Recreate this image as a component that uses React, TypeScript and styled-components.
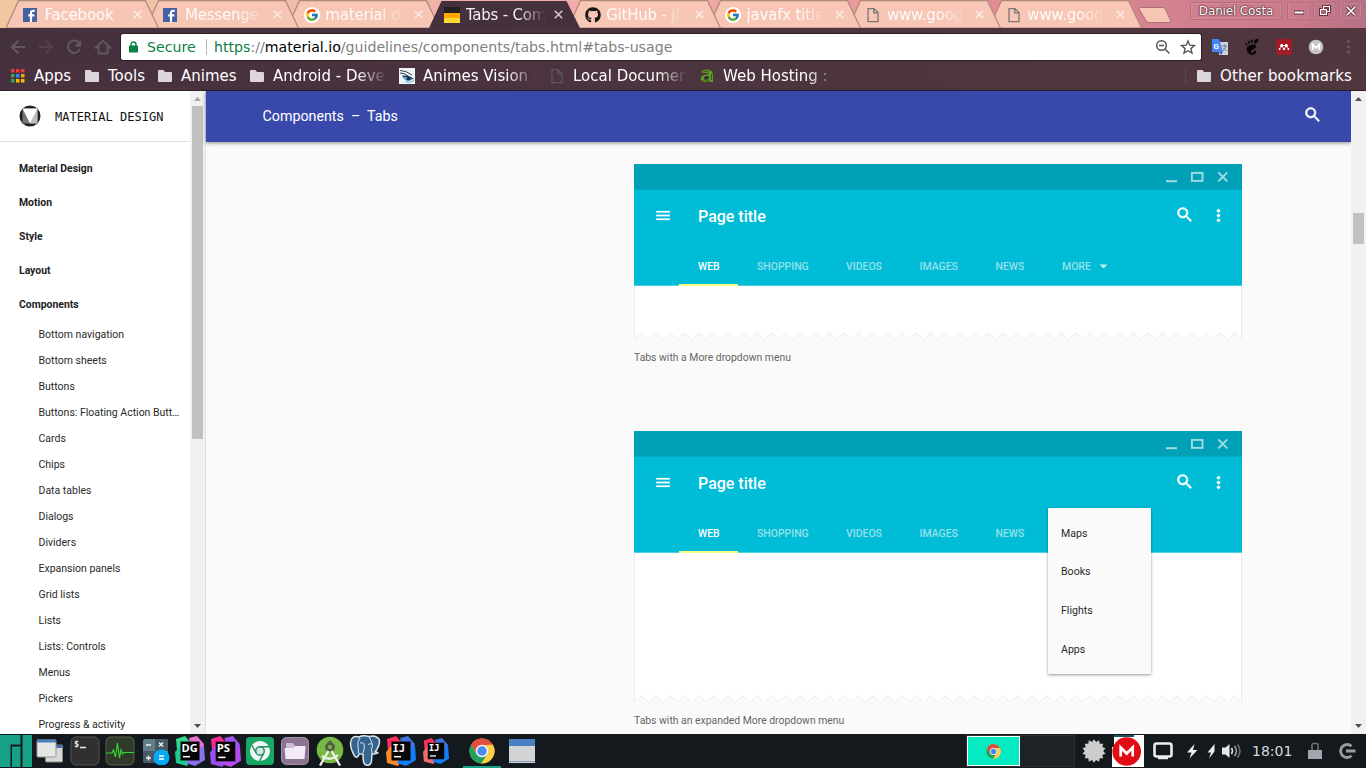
import React from 'react';
import styled, { createGlobalStyle } from 'styled-components';
import { FcGoogle } from 'react-icons/fc';
import { FaGithub, FaMendeley } from 'react-icons/fa';
import { SiGnome } from 'react-icons/si';
import { MdSearch, MdMenu, MdMoreVert } from 'react-icons/md';

const GlobalStyle = createGlobalStyle`
  * { box-sizing: border-box; }
  body { margin: 0; overflow: hidden; }
  svg { display: block; flex: none; }
`;

const uiFont = '"DejaVu Sans", sans-serif';
const pageFont = 'Roboto, sans-serif';

const Screen = styled.div`
  width: 1366px;
  height: 768px;
  display: flex;
  flex-direction: column;
  overflow: hidden;
  font-family: ${uiFont};
`;

/* ---------- browser chrome ---------- */

const TabStrip = styled.div`
  height: 28px;
  display: flex;
  padding-left: 6px;
  background: linear-gradient(90deg, #efc8a0 0, #f2c3a6 170px, #f0b5ac 400px, #efa2a5 800px, #dd8691 1040px, #d68391 1150px, #c9798b 1300px, #b67285 1366px);
`;

const Tab = styled.div<{ $z: number; $active?: boolean }>`
  position: relative;
  z-index: ${(p) => p.$z};
  flex: none;
  width: 153px;
  height: 28px;
  margin-right: -12.6px;
  padding-left: 17px;
  padding-top: 1px;
  display: flex;
  align-items: center;
  color: ${(p) => (p.$active ? '#f4eef0' : '#fffaf8')};
`;

const TabBack = styled.svg`
  position: absolute;
  left: 0;
  top: 0;
`;

const Favicon = styled.div`
  position: relative;
  width: 16px;
  height: 16px;
  display: flex;
  align-items: center;
  color: #181617;
`;

const TabTitle = styled.div<{ $full?: boolean }>`
  position: relative;
  width: 81px;
  margin-left: 5.5px;
  font-size: 15px;
  letter-spacing: -0.2px;
  line-height: 18px;
  white-space: nowrap;
  overflow: hidden;
  mask-image: ${(p) => (p.$full ? 'none' : 'linear-gradient(90deg, #000 52px, transparent 80px)')};
`;

const TabClose = styled.svg`
  position: relative;
  margin-left: 7.5px;
`;

const NewTab = styled.svg`
  margin: 6px 0 0 8px;
`;

const WindowButtons = styled.div`
  display: flex;
  gap: 3px;
  margin: 2px 4px 0 auto;
`;

const WindowButton = styled.div<{ $w: number; $gapBefore?: number }>`
  width: ${(p) => p.$w}px;
  height: 18px;
  margin-left: ${(p) => p.$gapBefore ?? 0}px;
  border: 1px solid #b0707c;
  border-radius: 2px;
  box-shadow: inset 0 0 0 1px #e4a2ac55;
  color: #fff;
  font-size: 12px;
  line-height: 16px;
  letter-spacing: -0.15px;
  text-shadow: 0 0 2px #49202c, 0 0 1px #49202c, 0 0 1px #49202c;
  display: flex;
  align-items: center;
  justify-content: center;
`;

const Toolbar = styled.div`
  height: 34px;
  display: flex;
  align-items: center;
  padding: 3px 0 0 10px;
  background: linear-gradient(90deg, #45303e, #4c343f 60%, #50373f);
`;

const NavIcons = styled.div`
  display: flex;
  gap: 12px;
  width: 111px;
`;

const AddressBar = styled.div`
  width: 1080px;
  height: 26px;
  background: #fff;
  border-radius: 2px;
  box-shadow: 0 0 0 1px #2e1c27;
  display: flex;
  align-items: center;
  padding: 0 5px 0 8px;
  font-size: 14.15px;
  color: #808080;
`;

const Secure = styled.span`
  color: #0b8043;
  margin-left: 9px;
  width: 50px;
`;

const Divider = styled.div`
  width: 1px;
  height: 16px;
  background: #b5b5b5;
  margin: 0 7px 0 9px;
`;

const Url = styled.span`
  flex: 1;
  white-space: nowrap;
  b { font-weight: normal; color: #000; }
  i { font-style: normal; color: #0b8043; }
`;

const AddressIcons = styled.div`
  display: flex;
  gap: 9px;
`;

const Extensions = styled.div`
  display: flex;
  align-items: center;
  gap: 16px;
  padding-left: 11px;
`;

const BookmarksBar = styled.div`
  height: 29px;
  display: flex;
  align-items: center;
  padding: 0 14px 1px 10px;
  background: linear-gradient(90deg, #47313e, #4d3540 60%, #51383f);
  border-bottom: 1px solid #32202c;
  color: #fff;
`;

const Bookmark = styled.div<{ $w: number }>`
  width: ${(p) => p.$w}px;
  display: flex;
  align-items: center;
  gap: 8px;
`;

const BookmarkText = styled.div<{ $fade?: boolean }>`
  width: ${(p) => (p.$fade ? '118px' : 'auto')};
  flex: none;
  white-space: nowrap;
  font-size: 15px;
  line-height: 20px;
  mask-image: ${(p) => (p.$fade ? 'linear-gradient(90deg, #000 84px, transparent 114px)' : 'none')};
`;

const OtherBookmarks = styled.div`
  margin-left: auto;
  width: 167px;
  height: 18px;
  padding-left: 10px;
  border-left: 1px solid #5e464d;
  display: flex;
  align-items: center;
  gap: 8px;
  font-size: 15px;
  letter-spacing: 0.1px;
  white-space: nowrap;
`;

/* ---------- page ---------- */

const Page = styled.div`
  flex: 1;
  min-height: 0;
  display: flex;
  background: #fafafa;
  font-family: ${pageFont};
`;

const Sidebar = styled.div`
  width: 190px;
  background: #fff;
  overflow: hidden;
`;

const Brand = styled.div`
  height: 51px;
  border-bottom: 1px solid #dedede;
  display: flex;
  align-items: center;
  padding-left: 18.5px;
  font-family: "DejaVu Sans Mono", monospace;
  font-size: 12px;
  color: #111;
`;

const BrandName = styled.span`
  margin: 2px 0 0 14.5px;
  white-space: nowrap;
`;

const Sections = styled.div`
  padding: 10px 0 0 19px;
`;

const Section = styled.div`
  height: 34px;
  line-height: 34px;
  font-size: 10.42px;
  font-weight: 700;
  color: #212121;
`;

const Topic = styled.div`
  width: 144px;
  margin-left: 19.5px;
  height: 26px;
  line-height: 26px;
  font-size: 10.5px;
  color: #2a2a2a;
  white-space: nowrap;
`;

const ScrollTrack = styled.div<{ $edge?: boolean }>`
  width: ${(p) => (p.$edge ? 16 : 15)}px;
  background: #f1f1f1;
  border-right: ${(p) => (p.$edge ? '1px solid #e0e0e0' : 'none')};
  display: flex;
  flex-direction: column;
  align-items: center;
`;

const ScrollThumb = styled.div<{ $before: number; $h: number }>`
  width: 11px;
  height: ${(p) => p.$h}px;
  margin-top: ${(p) => p.$before}px;
  margin-bottom: auto;
  background: #c1c1c1;
`;

const Main = styled.div`
  flex: 1;
  min-width: 0;
  display: flex;
  flex-direction: column;
`;

const PageHeader = styled.div`
  height: 51px;
  flex: none;
  background: #3949ab;
  box-shadow: 0 1px 4px rgba(0, 0, 0, 0.45);
  display: flex;
  align-items: center;
  justify-content: space-between;
  padding: 0 29px 3px 56.5px;
  color: #fff;
  font-size: 14.25px;
  white-space: pre;
`;

const HeaderTitle = styled.span`
  padding-top: 2px;
`;

const SearchIcon = styled(MdSearch).attrs({ size: 19.5 })`
  path:last-child {
    stroke: #fff;
    stroke-width: 0.7px;
  }
`;

const Article = styled.div`
  padding: 22px 0 0 428px;
`;

const Figure = styled.div<{ $h: number }>`
  width: 608px;
  height: ${(p) => p.$h}px;
`;

const Mock = styled.div<{ $h: number }>`
  position: relative;
  height: ${(p) => p.$h}px;
`;

const MockTitleBar = styled.div`
  height: 26px;
  background: #00a0b6;
  border-bottom: 1px solid #00a9c1;
  display: flex;
  justify-content: flex-end;
  padding: 7px 13px 0 0;
`;

const MockAppBar = styled.div`
  height: 50px;
  background: #00bcd7;
  display: flex;
  align-items: center;
  padding: 0 14.5px 0 20px;
  color: #fff;
`;

const MockTitle = styled.div`
  flex: 1;
  margin-left: 26px;
  padding-top: 3px;
  font-size: 16px;
  font-weight: 500;
`;

const MockTabs = styled.div`
  height: 46px;
  background: #00bcd7;
  border-bottom: 1px solid #4dd0e1;
  display: flex;
  padding-left: 45px;
`;

const MockTab = styled.div<{ $w: number; $active?: boolean }>`
  width: ${(p) => p.$w}px;
  height: 46px;
  padding: 8px 0 0 19px;
  border-bottom: ${(p) => (p.$active ? '2px solid #f4ff81' : '2px solid transparent')};
  display: flex;
  align-items: center;
  gap: 8px;
  font-size: 10.45px;
  font-weight: 500;
  color: ${(p) => (p.$active ? '#fff' : '#96e1ec')};
`;

const MockMenuIcon = styled(MdMenu).attrs({ size: 19 })`
  width: 18px;
  height: 19px;
  path:last-child {
    stroke: #fff;
    stroke-width: 0.3px;
  }
`;

const MockDots = styled(MdMoreVert).attrs({ size: 19 })`
  margin-left: 14.5px;
  path:last-child {
    stroke: #fff;
    stroke-width: 0.5px;
  }
`;

const Caption = styled.div`
  margin-top: 11px;
  font-size: 10.4px;
  line-height: 14px;
  color: #666;
`;

const Menu = styled.div`
  position: absolute;
  left: 414px;
  top: 77px;
  width: 103px;
  height: 166px;
  padding: 6.5px 13px 4px;
  background: #fafafa;
  border-radius: 1px;
  box-shadow: 0 1px 3px rgba(0, 0, 0, 0.42);
`;

const MenuItem = styled.div`
  height: 38.8px;
  line-height: 38.8px;
  font-size: 10.6px;
  color: #2a2a2a;
`;

/* ---------- task bar ---------- */

const TaskBar = styled.div`
  height: 34px;
  flex: none;
  display: flex;
  align-items: stretch;
  background: #14191d;
`;

const Launcher = styled.div<{ $w: number; $active?: boolean }>`
  width: ${(p) => p.$w}px;
  height: 34px;
  display: flex;
  align-items: center;
  justify-content: center;
  box-shadow: ${(p) => (p.$active ? 'inset 0 -2px 0 #16a085' : 'none')};
`;

const Pager = styled.div`
  margin: 1px 0 1px auto;
  width: 109px;
  height: 32px;
  display: flex;
  background: #1d2226;
  border: 1px solid #2b3236;
`;

const PagerActive = styled.div`
  width: 53px;
  height: 30px;
  border: 1px solid #fff;
  background: #04ebc3;
  display: flex;
  align-items: center;
  justify-content: center;
`;

const Clock = styled.div`
  width: 58px;
  padding-left: 8px;
  line-height: 34px;
  font-size: 14px;
  color: #d8d8d8;
`;

/* ---------- drawings ---------- */

const FacebookIcon = () => (
  <svg width="14" height="14" viewBox="0 0 14 14">
    <rect width="14" height="14" fill="#4661a3" />
    <path d="M8 14V5q0-2.200 2.200-2.200h1.600M5.300 7.400h6" stroke="#fff" strokeWidth="2.100" fill="none" />
  </svg>
);

const GoogleIcon = () => (
  <svg width="16" height="16" viewBox="0 0 16 16">
    <circle cx="8" cy="8" r="8" fill="#fff" />
    <FcGoogle x="1" y="1" width="14" height="14" size={14} />
  </svg>
);

const MaterialTabIcon = () => (
  <svg width="16" height="16">
    <rect width="16" height="6" fill="#212121" />
    <rect y="6" width="16" height="5" fill="#ffa400" />
    <rect y="11" width="16" height="5" fill="#fdd835" />
  </svg>
);

const DocIcon = ({ color }: { color: string }) => (
  <svg width="16" height="16" viewBox="0 0 16 16" fill="none" stroke={color} strokeWidth="1.3">
    <path d="M3 1.600h6l4 4v9H3zM8.800 1.800v4.100h4" />
  </svg>
);

const FolderIcon = () => (
  <svg width="16" height="16" viewBox="0 0 16 16">
    <path d="M1 3q0-1 1-1h4.500l1.500 2h6q1 0 1 1v8q0 1-1 1H2q-1 0-1-1z" fill="#dcd5db" />
  </svg>
);

const AppsIcon = () => {
  const colors = ['#f0392f', '#f0392f', '#f0392f', '#34a853', '#2d8cf0', '#f9a01b', '#34a853', '#fbbc05', '#fbbc05'];
  return (
    <svg width="16" height="16">
      {colors.map((c, i) => (
        <rect key={i} x={1 + (i % 3) * 5} y={1 + Math.floor(i / 3) * 5} width="3.500" height="3.500" fill={c} />
      ))}
    </svg>
  );
};

const EyeIcon = () => (
  <svg width="16" height="16">
    <rect width="16" height="16" fill="#eef5f9" />
    <path d="M1 2.500q6 0 12 4.500M1 5q5 0 8 3" stroke="#33414d" strokeWidth="1" fill="none" />
    <path d="M3 8.500q6-2 11 2.500-5 3-9 0z" fill="#4aa3d4" />
    <path d="M3.500 8q6-1 11 3M9 8.500q3 1 2 3.500H8z" stroke="#123" strokeWidth=".8" fill="#1b3a52" />
    <path d="M6 13.500q5 2 9-1" stroke="#64b2dd" fill="none" />
  </svg>
);

const HostingIcon = () => (
  <svg width="16" height="16" fill="none">
    <path d="M2 4.500Q3 1.500 8 1.500q6 0 6 6V14h-3l-1-1q-2 1.500-5 1-4-1-3-5 2-3 7-2.500L9 5H6z" fill="#5f9a26" />
    <path d="M5 10q0-2 3-2l2 .5q0 3-3 3.500-2 0-2-2z" fill="#3c2d38" />
    <path d="M4 4q3-2 6 0M12.500 6v6M4 13q3 1 6-1" stroke="#355c16" strokeWidth="1" />
  </svg>
);

const ChromeIcon = ({ size }: { size: number }) => (
  <svg width={size} height={size} viewBox="0 0 48 48">
    <circle cx="24" cy="24" r="23" fill="#fbc42f" />
    <path d="M4 12.500A23 23 0 0 1 44 12.500L24 13z" fill="#df4f3f" />
    <path d="M4 12.500A23 23 0 0 1 24 1l20 11.500H24L14.500 30z" fill="#df4f3f" />
    <path d="M4 12.500A23 23 0 0 0 23 47l11-17-10 5-10-5z" fill="#1fa05f" />
    <path d="M44 12.500A23 23 0 0 1 23 47l11-17V12.500z" fill="#fdd04a" />
    <circle cx="24" cy="24" r="11.500" fill="#f4f4f4" />
    <circle cx="24" cy="24" r="8.800" fill="#4a89f3" />
  </svg>
);

const Arrow = ({ up, color }: { up?: boolean; color: string }) => (
  <svg width="15" height="15" viewBox="0 0 15 15">
    <path d={up ? 'M4 10h7L7.500 6z' : 'M4 5h7L7.500 9z'} fill={color} />
  </svg>
);

const BrandLogo = () => (
  <svg width="22" height="22" viewBox="0 0 22 22">
    <circle cx="11" cy="11" r="10.500" fill="#212121" />
    <path d="M3.500 3.500h15v15h-15z" fill="#757575" />
    <path d="M18.500 3.500v15H11z" fill="#bdbdbd" />
    <path d="M3.500 3.500h15L11 18.500z" fill="#fff" />
  </svg>
);

const MockWindowIcons = () => (
  <svg width="64" height="13" viewBox="0 0 64 13" fill="none" stroke="#a3dbe2">
    <path d="M1 10.200h11" strokeWidth="2" />
    <rect x="26.900" y="1.900" width="10.600" height="8" strokeWidth="1.900" />
    <path d="M53.300 1.300l9 9M62.300 1.300l-9 9" strokeWidth="1.900" />
  </svg>
);

/* white paper area whose lower edge is torn in a zigzag */
const TornPaper = ({ height }: { height: number }) => {
  const pts = ['0.5,0', `0.5,${height - 1}`];
  for (let x = 7.2; x < 607; x += 14.48) {
    pts.push(`${x},${height - 7.3}`, `${Math.min(x + 7.24, 607.5)},${height - 0.5}`);
  }
  pts.push('607.5,0');
  return (
    <svg width="608" height={height}>
      <polyline points={pts.join(' ')} fill="#fff" stroke="#ebebeb" />
    </svg>
  );
};

const JetBrainsIcon = ({ label, colors, size }: { label: string; colors: string[]; size: number }) => (
  <svg width={size} height={size} viewBox="0 0 30 30">
    <path d="M1 3L10 0l6 7-9 9-5-2z" fill={colors[0]} />
    <path d="M14 2l8-2 7 8-2 10-9 2z" fill={colors[1]} />
    <path d="M0 16l5-6 13 10-6 10-11-3z" fill={colors[2]} />
    <path d="M19 14l10-4 1 14-10 6-9-3z" fill={colors[3]} />
    <rect x="5.500" y="5.500" width="19" height="19" fill="#050505" />
    <text
      x="6.500"
      y="15.500"
      fontSize={label === 'IJ' ? 10.5 : 11}
      fontWeight="bold"
      fontFamily={label === 'IJ' ? 'DejaVu Sans Mono, monospace' : 'Open Sans, sans-serif'}
      fill="#fff"
    >
      {label}
    </text>
    <path d="M8 20.700h7" stroke="#fff" strokeWidth="1.500" />
  </svg>
);

const PostgresIcon = () => (
  <svg width="32" height="32" viewBox="0 0 32 32" strokeLinejoin="round">
    <path
      d="M10 2Q2 0 1.500 8q0 6 4 13 2 2.500 4-.5l1-2q1.500 1 3.500.8 0 3 .5 7 .7 4 4 4t4-4.500l.5-7q4 .7 6-1-1-.8-3-.7 6-8 4-13-3-4.500-10-2.600Q14 0 10 2z"
      fill="#33658f"
      stroke="#dfe6ea"
      strokeWidth="1.500"
    />
    <path d="M11 3q-3 3-2 9 1 3 0 6M20 2q3 4 3.500 9-2 3-.5 7M11 8q3-1 4 1 1 5-1 9M22.500 9q-3-1-3.500 1" fill="none" stroke="#dfe6ea" strokeWidth="1" />
  </svg>
);

const ManjaroIcon = () => (
  <svg width="32" height="32">
    <path d="M0 0h20.500v9.500H10.500V32H0zM12 11.500h8.500V32H12zM22.500 0H32v32h-9.500z" fill="#16a085" />
  </svg>
);

const WindowsIcon = () => (
  <svg width="28" height="26" viewBox="0 0 28 26">
    <rect x="9.500" y="7" width="17" height="17" rx="1" fill="#d8d8d5" stroke="#888" />
    <path d="M10 7h16v3H10z" fill="#3b6fae" />
    <rect x="1" y="2" width="19" height="17" rx="1" fill="#e6e6e4" stroke="#999" />
    <path d="M1 1.500h19v3H1z" fill="#4a7fbf" />
  </svg>
);

const TerminalIcon = () => (
  <svg width="30" height="30">
    <rect x="1" y="1" width="28" height="28" rx="5" fill="#303030" stroke="#555" />
    <text x="4" y="11" fontSize="8.500" fontWeight="bold" fontFamily="DejaVu Sans Mono, monospace" fill="#eee">$</text>
    <path d="M10 11.500h6" stroke="#eee" strokeWidth="1.500" />
  </svg>
);

const MonitorIcon = () => (
  <svg width="30" height="30">
    <rect x="1" y="1" width="28" height="28" rx="5" fill="#303a2a" stroke="#59614f" />
    <path d="M1 17h6l1.500-3 2 7 2-14 2 15 1.500-8 1.500 4 1.500-1.500h10" stroke="#35d435" strokeWidth="1.200" fill="none" />
  </svg>
);

const CalculatorIcon = () => (
  <svg width="28" height="28">
    <rect x="1" y="2" width="25" height="24" rx="2" fill="#607d8b" />
    <path d="M1 14h12v12H3q-2 0-2-2zM13 2h11q2 0 2 2v10H13z" fill="#455a64" />
    <path d="M4 8h5M4 21h5M6.500 18.500v5M17 5.500l4 4m0-4l-4 4" stroke="#eee" strokeWidth="1.500" />
    <circle cx="19.500" cy="20.500" r="8" fill="#03a9f4" />
    <path d="M17 19h5M17 22h5" stroke="#fff" strokeWidth="1.400" />
  </svg>
);

const ChromiumAppIcon = () => (
  <svg width="28" height="28">
    <rect width="28" height="28" rx="4" fill="#18a765" />
    <circle cx="14" cy="14" r="10" fill="#f1f7f4" />
    <circle cx="14" cy="14" r="4.300" fill="#cfe9dc" stroke="#238a5c" strokeWidth="1.400" />
    <path d="M14 9.700h9M10.200 16L6 8.500M17.700 16.300L13.500 24" stroke="#238a5c" strokeWidth="1.400" />
  </svg>
);

const FilesIcon = () => (
  <svg width="28" height="28">
    <rect x=".5" y=".5" width="27" height="27" rx="5" fill="#8c7491" stroke="#a791ab" />
    <path d="M5 6h7l2 3h8v4H5z" fill="#cfbcd4" />
    <path d="M3.500 11h9l2-2h10l-1 13h-19z" fill="#f4e9f7" />
  </svg>
);

const AndroidStudioIcon = () => (
  <svg width="28" height="30" fill="none">
    <circle cx="14" cy="14" r="13.300" fill="#78b943" />
    <circle cx="14" cy="11" r="3.500" stroke="#555e4b" strokeWidth="3" />
    <path d="M14 7V4.500" stroke="#555e4b" strokeWidth="2.500" />
    <path d="M12.500 15L4 29.500M15.500 15L24 29.500M6 20q8 6 16-1" stroke="#eef1ec" strokeWidth="2.300" />
  </svg>
);

const AppWindowIcon = () => (
  <svg width="26" height="24">
    <rect width="26" height="24" fill="#d3d4d5" />
    <rect width="26" height="7" fill="#4a7fc1" />
    <path d="M0 22.500h26" stroke="#8199b4" />
  </svg>
);

const gearPoints = Array.from({ length: 28 }, (_, i) => {
  const r = i % 2 ? 9.2 : 11.8;
  const a = (i * Math.PI) / 14;
  return `${12 + r * Math.sin(a)},${12 - r * Math.cos(a)}`;
}).join(' ');

const GearIcon = () => (
  <svg width="24" height="24">
    <polygon points={gearPoints} fill="#cdcdcb" />
  </svg>
);

const MegaIcon = () => (
  <svg width="32" height="32" viewBox="0 0 32 32">
    <rect width="32" height="32" fill="#fff" />
    <path d="M0 0h22v2H0z" fill="#1b5058" />
    <path d="M0 0h2v12H0z" fill="#14191d" />
    <circle cx="14.700" cy="16.500" r="14.300" fill="#e10d14" />
    <path d="M8.700 21.500v-9l6 6 6-6v9" stroke="#fff" strokeWidth="2.700" fill="none" />
  </svg>
);

const ScreenIcon = () => (
  <svg width="20" height="18" fill="none">
    <rect x="1.500" y="1.500" width="17" height="13" rx="2" stroke="#eee" strokeWidth="2.600" />
    <path d="M5 16h10" stroke="#eee" strokeWidth="2.500" />
  </svg>
);

const BoltIcon = ({ half }: { half?: boolean }) => (
  <svg width="12" height="18" viewBox="0 0 12 18">
    <path d={half ? 'M9.500 2L2.500 10.500H6l-2 6 5.500-7z' : 'M8.500 2L1 10.500h4.500l-2 6L11.500 8H7z'} fill="#ececec" />
  </svg>
);

const VolumeIcon = () => (
  <svg width="22" height="16" fill="none" strokeWidth="1.500">
    <path d="M1 4.500h3.500l4-3.500v14l-4-3.500H1z" fill="#e6e6e6" />
    <path d="M10.500 5q2 3 0 6" stroke="#e6e6e6" />
    <path d="M13.500 3q4 5 0 10" stroke="#a5a5a5" />
    <path d="M16.500 1.500q5 6.500 0 13" stroke="#707478" />
  </svg>
);

const LockTrayIcon = () => (
  <svg width="14" height="18" fill="none">
    <path d="M4 9V3q0-1.500 1.500-1.500h3Q10 1.500 10 3v6" stroke="#6c717a" strokeWidth="1.600" />
    <rect y="8" width="14" height="9" fill="#a3a4ae" />
  </svg>
);

const LogoutIcon = () => (
  <svg width="18" height="18" fill="none" stroke="#9a9ba1" strokeWidth="2.800">
    <path d="M13.500 4.200a6.500 6.500 0 1 0 0 9.600M8 9h9.500" />
  </svg>
);

const TranslateIcon = () => (
  <svg width="16" height="16">
    <rect x="7" y="3" width="9" height="13" fill="#cdd3dc" />
    <path d="M0 0h7l4 13H0z" fill="#4285f4" />
    <text x="1.500" y="9.500" fontSize="8" fontWeight="bold" fontFamily="Roboto, sans-serif" fill="#fff">G</text>
    <path d="M10 7h5M12.500 5.500V7M14 7q-1 3-3.500 5M11.500 9l3 3" stroke="#6a7a90" fill="none" />
    <path d="M7 13h4l-2 3z" fill="#3367d6" />
  </svg>
);

/* ---------- composition ---------- */

const tabs = [
  { title: 'Facebook', icon: <FacebookIcon />, full: true },
  { title: 'Messenge', icon: <FacebookIcon /> },
  { title: 'material d', icon: <GoogleIcon /> },
  { title: 'Tabs - Com', icon: <MaterialTabIcon />, active: true },
  { title: 'GitHub - jf', icon: <FaGithub size={16} /> },
  { title: 'javafx title', icon: <GoogleIcon /> },
  { title: 'www.goog', icon: <DocIcon color="#777" /> },
  { title: 'www.goog', icon: <DocIcon color="#777" /> },
];

const bookmarks = [
  { text: 'Apps', icon: <AppsIcon />, w: 74 },
  { text: 'Tools', icon: <FolderIcon />, w: 73 },
  { text: 'Animes', icon: <FolderIcon />, w: 92 },
  { text: 'Android - Deve', icon: <FolderIcon />, w: 150, fade: true },
  { text: 'Animes Vision -', icon: <EyeIcon />, w: 150, fade: true },
  { text: 'Local Documen', icon: <DocIcon color="#5d565a" />, w: 150, fade: true },
  { text: 'Web Hosting :', icon: <HostingIcon />, w: 150, fade: true },
];

const topics = [
  'Bottom navigation', 'Bottom sheets', 'Buttons', 'Buttons: Floating Action Butt…', 'Cards', 'Chips',
  'Data tables', 'Dialogs', 'Dividers', 'Expansion panels', 'Grid lists', 'Lists', 'Lists: Controls',
  'Menus', 'Pickers', 'Progress & activity',
];

const mockTabs = [
  { label: 'WEB', w: 59 },
  { label: 'SHOPPING', w: 89 },
  { label: 'VIDEOS', w: 73.5 },
  { label: 'IMAGES', w: 76 },
  { label: 'NEWS', w: 66.5 },
  { label: 'MORE', w: 66 },
];

const BrowserTab = ({ tab, index }: { tab: (typeof tabs)[number]; index: number }) => (
  <Tab $z={tab.active ? 20 : 10 - index} $active={tab.active}>
    <TabBack width="153" height="28">
      {tab.active ? (
        <path d="M2 28L14.500 1H139.500L153 28z" fill="#45303d" />
      ) : (
        <path d="M0 28L12.500.7H139.500L152.500 28z" fill="#f7c6b5" stroke="#b08a7c" strokeWidth="1.200" />
      )}
    </TabBack>
    <Favicon>{tab.icon}</Favicon>
    <TabTitle $full={tab.full}>{tab.title}</TabTitle>
    <TabClose width="9" height="9" viewBox="0 0 9 9">
      <path d="M.8.800l7.400 7.400M8.200.800L.8 8.200" stroke={tab.active ? '#cfc6ca' : '#fdebe5'} strokeWidth="1.600" />
    </TabClose>
  </Tab>
);

const MockWindow = ({ height, menu }: { height: number; menu?: boolean }) => (
  <Mock $h={height}>
    <MockTitleBar><MockWindowIcons /></MockTitleBar>
    <MockAppBar>
      <MockMenuIcon />
      <MockTitle>Page title</MockTitle>
      <SearchIcon />
      <MockDots />
    </MockAppBar>
    <MockTabs>
      {mockTabs.filter((t) => !menu || t.label !== 'MORE').map((t, i) => (
        <MockTab key={t.label} $w={t.w} $active={i === 0}>
          {t.label}
          {t.label === 'MORE' && <svg width="9" height="5"><path d="M.5.500h8l-4 4z" fill="#c5f0f5" /></svg>}
        </MockTab>
      ))}
    </MockTabs>
    <TornPaper height={height - 122} />
    {menu && (
      <Menu>
        {['Maps', 'Books', 'Flights', 'Apps'].map((m) => <MenuItem key={m}>{m}</MenuItem>)}
      </Menu>
    )}
  </Mock>
);

export default function App() {
  return (
    <Screen>
      <GlobalStyle />
      <TabStrip>
        {tabs.map((t, i) => <BrowserTab key={i} tab={t} index={i} />)}
        <NewTab width="36" height="18" viewBox="0 0 36 18">
          <path d="M3.500 1.500h22q2 0 3 2l5 11q1 2-1.500 2H12q-2 0-3-2L2 3q-.5-1.500 1.500-1.500z" fill="#f7c6b5" stroke="#a86f76" />
        </NewTab>
        <WindowButtons>
          <WindowButton $w={92}>Daniel Costa</WindowButton>
          <WindowButton $w={23} $gapBefore={2}>
            <svg width="12" height="10"><path d="M1 6.500h10" stroke="#5c2f3a" strokeWidth="4" /><path d="M1.500 6.500h9" stroke="#fff" strokeWidth="2" /></svg>
          </WindowButton>
          <WindowButton $w={23}>
            <svg width="12" height="12" fill="none"><g stroke="#6c3a46" strokeWidth="3"><rect x="4.500" y="1.500" width="6" height="5" /><rect x="1.500" y="4.500" width="6" height="5" /></g><g stroke="#fff"><rect x="4.500" y="1.500" width="6" height="5" /><rect x="1.500" y="4.500" width="6" height="5" fill="#a96474" /></g></svg>
          </WindowButton>
          <WindowButton $w={23}>
            <svg width="12" height="12"><path d="M2 2l8 8M10 2l-8 8" stroke="#6c3a46" strokeWidth="3.500" /><path d="M2 2l8 8M10 2l-8 8" stroke="#fff" strokeWidth="1.700" /></svg>
          </WindowButton>
        </WindowButtons>
      </TabStrip>

      <Toolbar>
        <NavIcons>
          <svg width="16" height="16" fill="none" stroke="#615a5c" strokeWidth="2"><path d="M15 8H3M8.500 1.500L2 8l6.500 6.500" /></svg>
          <svg width="16" height="16" fill="none" stroke="#55434c" strokeWidth="2"><path d="M1 8h12M7.500 1.500L14 8l-6.500 6.500" /></svg>
          <svg width="16" height="16" fill="none" stroke="#615a5c" strokeWidth="2"><path d="M13.500 4.500A6.200 6.200 0 1 0 14 10" /><path d="M15 1v6.500H8.500z" fill="#615a5c" stroke="none" /></svg>
          <svg width="18" height="16" fill="none" stroke="#615a5c" strokeWidth="1.800"><path d="M2 8.500L9 1.700l7 6.800h-2.500v6h-9v-6z" /></svg>
        </NavIcons>
        <AddressBar>
          <svg width="9" height="12"><path d="M2 5V3.500a2.500 2.500 0 0 1 5 0V5" fill="none" stroke="#0b8043" strokeWidth="1.400" /><rect y="4.500" width="9" height="7" rx=".6" fill="#0b8043" /></svg>
          <Secure>Secure</Secure>
          <Divider />
          <Url><i>https</i>://<b>material.io</b>/guidelines/components/tabs.html#tabs-usage</Url>
          <AddressIcons>
            <svg width="16" height="16" fill="none" stroke="#555" strokeWidth="1.500"><circle cx="6.500" cy="6.500" r="4.800" /><path d="M10 10l4.500 4.500M4 6.500h5" /></svg>
            <svg width="16" height="16" viewBox="0 0 16 16" fill="none" stroke="#555" strokeWidth="1.400"><path d="M8 2l1.800 4.200 4.600.4-3.500 3 1.100 4.500L8 11.700l-4 2.400 1.100-4.500-3.500-3 4.600-.4z" /></svg>
          </AddressIcons>
        </AddressBar>
        <Extensions>
          <TranslateIcon />
          <SiGnome size={16} color="#050505" />
          <svg width="16" height="16"><rect width="16" height="16" rx="2" fill="#a11c25" /><FaMendeley x="2.500" y="2.500" size={11} color="#fff" /></svg>
          <svg width="16" height="16"><circle cx="8" cy="8" r="7.300" fill="#c5c5c3" /><path d="M4.700 11V5.500L8 8.800l3.300-3.300V11" stroke="#fff" strokeWidth="1.800" fill="none" /></svg>
          <svg width="16" height="16" fill="#645c5e"><circle cx="8.500" cy="2.500" r="1.600" /><circle cx="8.500" cy="7.800" r="1.600" /><circle cx="8.500" cy="13" r="1.600" /></svg>
        </Extensions>
      </Toolbar>

      <BookmarksBar>
        {bookmarks.map((b) => (
          <Bookmark key={b.text} $w={b.w}>
            {b.icon}
            <BookmarkText $fade={b.fade}>{b.text}</BookmarkText>
          </Bookmark>
        ))}
        <OtherBookmarks><FolderIcon />Other bookmarks</OtherBookmarks>
      </BookmarksBar>

      <Page>
        <Sidebar>
          <Brand><BrandLogo /><BrandName>MATERIAL DESIGN</BrandName></Brand>
          <Sections>
            {['Material Design', 'Motion', 'Style', 'Layout', 'Components'].map((s) => <Section key={s}>{s}</Section>)}
            {topics.map((t) => <Topic key={t}>{t}</Topic>)}
          </Sections>
        </Sidebar>
        <ScrollTrack $edge>
          <Arrow up color="#a3a3a3" />
          <ScrollThumb $before={0} $h={333} />
          <Arrow color="#505050" />
        </ScrollTrack>
        <Main>
          <PageHeader>
            <HeaderTitle>{'Components  –  Tabs'}</HeaderTitle>
            <SearchIcon />
          </PageHeader>
          <Article>
            <Figure $h={267}>
              <MockWindow height={176} />
              <Caption>Tabs with a More dropdown menu</Caption>
            </Figure>
            <Figure $h={303}>
              <MockWindow height={272} menu />
              <Caption>Tabs with an expanded More dropdown menu</Caption>
            </Figure>
          </Article>
        </Main>
        <ScrollTrack>
          <Arrow up color="#505050" />
          <ScrollThumb $before={107} $h={31} />
          <Arrow color="#505050" />
        </ScrollTrack>
      </Page>

      <TaskBar>
        <Launcher $w={32}><ManjaroIcon /></Launcher>
        <Launcher $w={36}><WindowsIcon /></Launcher>
        <Launcher $w={34}><TerminalIcon /></Launcher>
        <Launcher $w={35}><MonitorIcon /></Launcher>
        <Launcher $w={37}><CalculatorIcon /></Launcher>
        <Launcher $w={32}><JetBrainsIcon label="DG" size={30} colors={['#35d78e', '#e86ed0', '#22c98c', '#8a73ea']} /></Launcher>
        <Launcher $w={38}><JetBrainsIcon label="PS" size={31} colors={['#f52c8f', '#a354f0', '#9c4df1', '#b44af2']} /></Launcher>
        <Launcher $w={32}><ChromiumAppIcon /></Launcher>
        <Launcher $w={38}><FilesIcon /></Launcher>
        <Launcher $w={32}><AndroidStudioIcon /></Launcher>
        <Launcher $w={38}><PostgresIcon /></Launcher>
        <Launcher $w={33}><JetBrainsIcon label="IJ" size={30} colors={['#fe315d', '#3f73dd', '#f98b2e', '#137df5']} /></Launcher>
        <Launcher $w={38}><JetBrainsIcon label="IJ" size={26} colors={['#fe315d', '#3f73dd', '#f06a6e', '#137df5']} /></Launcher>
        <Launcher $w={8} />
        <Launcher $w={38} $active><ChromeIcon size={26} /></Launcher>
        <Launcher $w={42}><AppWindowIcon /></Launcher>
        <Pager><PagerActive><ChromeIcon size={15} /></PagerActive></Pager>
        <Launcher $w={37}><GearIcon /></Launcher>
        <Launcher $w={32}><MegaIcon /></Launcher>
        <Launcher $w={38}><ScreenIcon /></Launcher>
        <Launcher $w={20}><BoltIcon /></Launcher>
        <Launcher $w={17}><BoltIcon half /></Launcher>
        <Launcher $w={25}><VolumeIcon /></Launcher>
        <Clock>18:01</Clock>
        <Launcher $w={25}><LockTrayIcon /></Launcher>
        <Launcher $w={39}><LogoutIcon /></Launcher>
      </TaskBar>
    </Screen>
  );
}
